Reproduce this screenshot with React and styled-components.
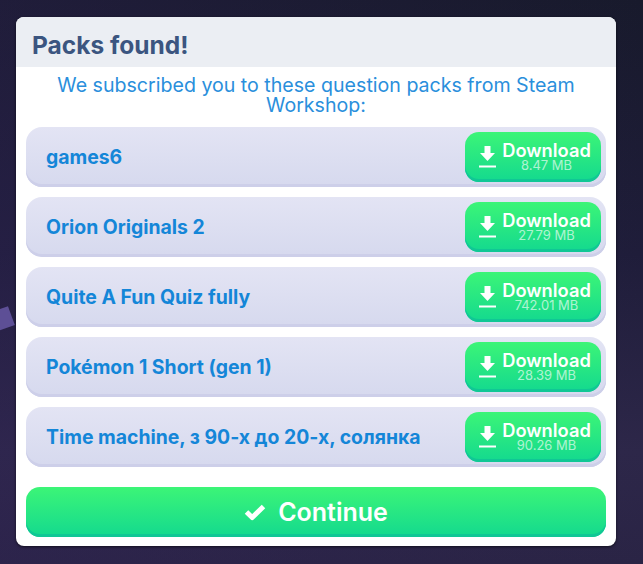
import React from "react"
import styled, { createGlobalStyle } from "styled-components"

const packs = [
  { name: "games6", size: "8.47 MB" },
  { name: "Orion Originals 2", size: "27.79 MB" },
  { name: "Quite A Fun Quiz fully", size: "742.01 MB" },
  { name: "Pokémon 1 Short (gen 1)", size: "28.39 MB" },
  { name: "Time machine, з 90-х до 20-х, солянка", size: "90.26 MB" },
]

const App = () => {
  return (
    <Page>
      <GlobalStyle />
      <Shard />
      <Card>
        <Header>Packs found!</Header>
        <Intro>We subscribed you to these question packs from Steam Workshop:</Intro>
        <List>
          {packs.map((pack) => (
            <Row key={pack.name}>
              <PackName>{pack.name}</PackName>
              <DownloadButton>
                <svg width="17" height="22" viewBox="0 0 17 22">
                  <path d="M5.500 0h6v7h4.500L8.500 15 1 7h4.500z" fill="#fff" />
                  <rect y="19.500" width="17" height="2" fill="#fff" />
                </svg>
                <DownloadText>
                  <DownloadLabel>Download</DownloadLabel>
                  <DownloadSize>{pack.size}</DownloadSize>
                </DownloadText>
              </DownloadButton>
            </Row>
          ))}
        </List>
        <ContinueButton>
          <svg width="22" height="18" viewBox="0 0 22 18">
            <path d="M2.500 9 8.200 14.500 19.500 3.500" fill="none" stroke="#fff" strokeWidth="5" strokeLinejoin="round" />
          </svg>
          Continue
        </ContinueButton>
      </Card>
    </Page>
  )
}

export default App

const GlobalStyle = createGlobalStyle`
  html, body {
    margin: 0;
    padding: 0;
    background: #1e1c36;
  }
`

const Page = styled.div`
  position: relative;
  width: 643px;
  height: 564px;
  box-sizing: border-box;
  padding: 17px 27px 18px 16px;
  overflow: hidden;
  background:
    linear-gradient(90deg, rgba(50, 35, 90, 0.3) 0%, rgba(50, 35, 90, 0) 100%),
    linear-gradient(180deg, #181a2c 0%, #1f1d3a 45%, #2d2749 80%, #2a2445 100%);
  font-family: "Inter", "Liberation Sans", sans-serif;
`

const Shard = styled.div`
  position: absolute;
  left: -8px;
  top: 309px;
  width: 20px;
  height: 20px;
  background: #5d4f96;
  transform: rotate(-20deg);
`

const Card = styled.div`
  display: flex;
  flex-direction: column;
  height: 529px;
  overflow: hidden;
  background: #fff;
  border-radius: 8px;
  box-shadow: 0 1px 3px rgba(0, 0, 0, 0.6);
`

const Header = styled.h1`
  height: 50px;
  margin: 0;
  padding: 0 16px;
  line-height: 56px;
  font-size: 24.5px;
  font-weight: 700;
  color: #3b5580;
  background: #ebeef3;
`

const Intro = styled.p`
  height: 60px;
  margin: 0;
  padding: 8px 30px 0;
  box-sizing: border-box;
  text-align: center;
  font-size: 19.6px;
  font-weight: 400;
  line-height: 20px;
  color: #2a8fdc;
`

const List = styled.div`
  display: flex;
  flex-direction: column;
  gap: 10px;
  padding: 0 10px;
`

const Row = styled.div`
  display: flex;
  align-items: center;
  justify-content: space-between;
  height: 60px;
  box-sizing: border-box;
  padding: 0 5px 0 20px;
  border-radius: 16px;
  background: linear-gradient(180deg, #e3e4f4 0%, #d6d9ee 100%);
  box-shadow: inset 0 -3px 0 #cdcfe9;
`

const PackName = styled.span`
  font-size: 19.4px;
  font-weight: 700;
  color: #1486d8;
`

const DownloadButton = styled.div`
  display: flex;
  align-items: center;
  gap: 6px;
  width: 136px;
  height: 50px;
  box-sizing: border-box;
  padding: 0 10px 0 14px;
  border-radius: 14px;
  background: linear-gradient(180deg, #3cf577 0%, #13d98f 100%);
  box-shadow: inset 0 -3px 0 #10c795;
`

const DownloadText = styled.div`
  display: flex;
  flex: 1;
  flex-direction: column;
  align-items: center;
  margin-bottom: 2px;
`

const DownloadLabel = styled.span`
  font-size: 18.3px;
  font-weight: 600;
  line-height: 18px;
  color: #fff;
`

const DownloadSize = styled.span`
  font-size: 13px;
  line-height: 13px;
  color: rgba(255, 255, 255, 0.65);
`

const ContinueButton = styled.div`
  display: flex;
  align-items: center;
  justify-content: center;
  gap: 12px;
  height: 50px;
  margin: 20px 10px 0;
  box-sizing: border-box;
  border-radius: 14px;
  font-size: 25px;
  font-weight: 600;
  color: #fff;
  background: linear-gradient(180deg, #3cf577 0%, #13d98f 100%);
  box-shadow: inset 0 -3px 0 #10c795;
`
